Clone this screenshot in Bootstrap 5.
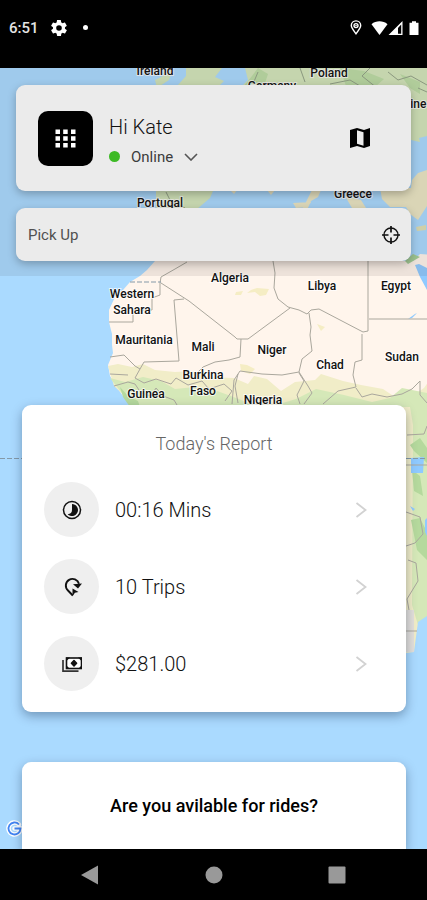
<!DOCTYPE html>
<html lang="en">
<head>
<meta charset="utf-8">
<meta name="viewport" content="width=device-width, initial-scale=1">
<title>Driver home</title>
<link rel="stylesheet" href="https://cdn.jsdelivr.net/npm/bootstrap@5.3.0/dist/css/bootstrap.min.css">
<style>
  body { font-family: Roboto, "Liberation Sans", sans-serif; color: #111; background: #000; }
  svg { display: block; flex: none; }
  .status-bar { height: 68px; padding: 0 7px 13px 9px; }
  .clock { font-size: 15px; font-weight: 500; line-height: 20px; color: #e4e4e4; }
  .gear { margin-left: 12px; }
  .screen { background: #aadaff; isolation: isolate; }
  .map-layer { inset: 0; z-index: -1; }
  .map-layer text { font-size: 12px; font-weight: 500; fill: #111; stroke: #fff; stroke-opacity: .75; stroke-width: 2px; paint-order: stroke; text-anchor: middle; }
  .top-panel { padding: 17px 16px 15px; gap: 17px; background: rgba(60, 40, 40, .09); }
  .panel-card { background: #ebebeb; border-radius: 9px; box-shadow: 0 3px 8px rgba(0, 0, 0, .26); }
  .profile { height: 106px; padding: 0 38px 0 22px; gap: 16px; }
  .menu-btn { width: 55px; height: 55px; border-radius: 10px; background: #000; }
  .who { padding-top: 5px; }
  .greeting { font-size: 20px; line-height: 24px; font-weight: 300; }
  .status-btn { font-size: 15px; line-height: 20px; color: #3c3c3c; gap: 11px; margin-top: 8px; }
  .dot { width: 11px; height: 11px; background: #3dba25; }
  .pickup { height: 53px; padding: 0 11px 0 12px; }
  .pickup input { min-width: 0; font-size: 15px; line-height: 20px; color: #505050; outline: 0; }
  .pickup input::placeholder { color: #505050; opacity: 1; }
  .sheet { margin: 0 21px 0 22px; border: 0; border-radius: 9px; box-shadow: 0 4px 11px rgba(0, 20, 50, .34); }
  .report { margin-top: 129px; padding: 27px 22px 21px; }
  .report h2 { font-size: 18px; line-height: 24px; font-weight: 300; color: #666; margin: 0 0 26px; }
  .report ul { gap: 22px; padding-right: 17px; }
  .stat { gap: 16px; color: #111; font-size: 20px; line-height: 28px; font-weight: 300; }
  .bubble { width: 55px; height: 55px; background: #efefef; }
  .rides { margin-top: 50px; padding: 32px 16px 30px; border-bottom-left-radius: 0; border-bottom-right-radius: 0; }
  .rides h2 { font-size: 18px; line-height: 24px; font-weight: 500; color: #000; }
  .nav-keys { height: 51px; padding: 0 80px; background: #000; z-index: 1; }
</style>
<script src="https://cdn.jsdelivr.net/npm/bootstrap@5.3.0/dist/js/bootstrap.bundle.min.js"></script>
</head>
<body>
<div class="d-flex flex-column min-vh-100">
  <header class="status-bar d-flex align-items-center bg-black text-white">
    <span class="clock">6:51</span>
    <svg class="gear" width="16" height="16" viewBox="2 2 20 20" fill="#fff" aria-hidden="true"><path d="M19.4 13c0-.3.1-.6.1-1s0-.7-.1-1l2.1-1.6c.2-.2.2-.4.1-.6l-2-3.500c-.1-.2-.4-.3-.6-.2l-2.500 1a7 7 0 0 0-1.700-1l-.4-2.600A.5.5 0 0 0 14 2h-4c-.3 0-.5.2-.5.400l-.4 2.700c-.6.200-1.200.600-1.700 1l-2.500-1c-.2-.1-.5 0-.6.200l-2 3.500c-.1.200-.1.500.1.600L4.500 11a8 8 0 0 0 0 2l-2.100 1.600c-.2.200-.2.400-.1.600l2 3.500c.1.200.4.300.6.200l2.500-1c.5.400 1.100.7 1.700 1l.4 2.600c0 .3.2.5.5.5h4c.3 0 .5-.2.5-.4l.4-2.700c.6-.2 1.200-.6 1.700-1l2.500 1c.2.1.5 0 .6-.2l2-3.500c.1-.2.1-.5-.1-.6zM12 15.500a3.500 3.500 0 1 1 0-7 3.500 3.500 0 0 1 0 7z"/></svg>
    <svg class="ms-3" width="5" height="5" viewBox="0 0 6 6" aria-hidden="true"><circle cx="3" cy="3" r="3" fill="#fff"/></svg>
    <svg class="ms-auto" width="12" height="15" viewBox="0 0 12 15" fill="none" stroke="#fff" stroke-width="1.400" aria-hidden="true"><path d="M6 13.800C3.500 10.600 1.300 7.900 1.300 5.600a4.700 4.700 0 0 1 9.400 0c0 2.300-2.200 5-4.700 8.200z"/><circle cx="6" cy="5.600" r="2"/><circle cx="6" cy="5.600" r=".8" fill="#fff" stroke="none"/></svg>
    <svg class="ms-2" width="50" height="16" viewBox="0 0 50 16" fill="#fff" aria-hidden="true"><path d="M1.500 4.200C6 .4 13 .4 17.500 4.200L9.500 15z"/><path d="M32.500 1v14h-14zM31.200 4.500l-3.200 3.500v5.800h3.200z" fill-rule="evenodd"/><path d="M42 1.200h4v1.600h2.500V15h-9V2.800H42z"/></svg>
  </header>

  <main class="screen position-relative flex-grow-1 d-flex flex-column">
    <div class="map-layer position-absolute overflow-hidden">
      <svg width="100%" height="100%" viewBox="0 68 427 781" preserveAspectRatio="xMidYMin slice" role="img" aria-label="Map of Africa">
        <rect y="68" width="427" height="781" fill="#aadaff"/>
        <!-- Europe -->
        <g fill="#d3e6bb">
          <path d="M155 80l8-4 4-8h6l-4 12-12 8zM186 68h36l-7 9 9 4-5 5h-42l9-10z"/>
          <path d="M240 88l8-8-3-12h182v68l-8 2 1 4-9-2H240z"/>
          <path d="M156 191h57l-3 7-14 12h-40z"/>
        </g>
        <path d="M258 68l10 6-4 12h-20l8-10zM340 68l24 3 20 8-8 7h-30zM400 74l20 8v12l-10-6z" fill="#bcdca5"/>
        <path d="M380 188h31l1-8 6-7 9-3v36l-9 14-8-6-4-7h-16l-8-8zM293 203l18-1-3 5-12 1zM230 190h7l-3 4zM267 190h8l-4 5zM312 190h9l-3 7-7 4-4 9h-5zM345 196l16 4 5 8h-14z" fill="#ebe6c4"/>
        <path d="M166 192l4 8 15 8M418 88l9 4M370 68l-8 8 15 12M300 68l5 14M258 72l-5 12M388 72l10 8 13-4 16 9M330 84l20-4 10 6" fill="none" stroke="#93a388"/>
        <path d="M416 227l10-2v5l-9 1z" fill="#dfe0b5"/>
        <!-- Africa -->
        <path d="M155 261l-8 9-7 6-10 6-7 8-8 7-6 13v12l3 12v11l1 8-5 12 2 11 6 10 7 10 12 14v40h297V255l-12-1-7 7z" fill="#fff5ec"/>
        <path d="M405 261l8-7 7 3-12 7z" fill="#a5cf98"/>
        <path d="M108 366l10-2 14 3 11-3 12 6 20 2 17-1 15 6 27 1 14 6 6-8 13 3 14 12 14-9 20-2 6-6 22 7 18 4 22 4 12 8 20-3 9-6 10-14 12-3v252l-9 5-3 18-4 13h-60V470H133v-66l-19-18z" fill="#f1edc8"/>
        <path d="M110 378l15 4 18-5 18 4 14 8 20-2 22 4 14 5 20 8 15 4 30-9 20-10 28 6 28 7 18-4 12-10 25 5v227l-9 5-6-20 1-180-3-18H133z" fill="#d5e8b8"/>
        <path d="M120 387l8 9 10 5 2 6h-10l-7-10zM410 445l10-7 7 10v15l-13-12zM411 520l9-2 7 14v28l-10-10zM412 470l8 6 3 20-9-5z" fill="#b5d99d"/>
        <path d="M406 610h8v42h-8z" fill="#e2dfdb"/>
        <path d="M427 616l-9 6-4 30-8 1v60h21z" fill="#aadaff"/>
        <path d="M411 458l13-1-1 16h-12zM425 520l2-2v18l-2-4zM410 506l5 3-2 2zM415 265l5 12 7 13v-22l-8-4zM417 313l-5 5-4 1 7-5z" fill="#8fcaff"/>
        <path d="M240 364l7 1 8 4-5 5-9-3zM257 288l12 1-3 6-6 1-5-4-8 1 4-3zM236 292l7-1-2 4h-6zM317 324l8 3-4 4z" fill="#f5edc4"/>
        <g fill="none" stroke="#aaa79d" stroke-width="1">
          <path d="M187 262l-12 7-14 8-1 6v12l-8 3v12h-19v12h-24M161 283l28 18 46 36 2 2h11l42-31M273 261l2 12-1 15 4 11 10 8 11 3 8 4 4-4 8-1 44 23 5-1V261M369 319h58M184 299l-10 1 5 61-35 1-4 7-5-3-11-11-14 2M241 339l-1 18-11 3-14 2-12 5-8 8M309 313l2 14-1 8 2 16-10 8-3 13-17 3-20-1-22-3-6 9-2 24"/>
          <path d="M362 334v26l-7 2-2 13 3 12-18 4-15 13M299 373l5 8-7 14 3 9M299 372l9 14 4 7-8 11M356 388l6 9 10-3 15 3 15-3 10-5 8-8v14l7 8"/>
          <path d="M110 374l18 1M114 386l14-4 7 2 6 9 10 3 5-8 7 8 11 4 3 5M140 369l-5 9 9 5 12-4 15 5 5-6 12 7 14-4 7 8 15-5 8 7-7 10M238 374l-3 12 3 17M407 435l17-1 3-8M406 465h21M406 512l14 5 3 17-8 9-9 3M408 560l8 3 2 18-11 18 2 11M406 631h11"/>
        </g>
        <path d="M130 282h31M0 458.500h427" fill="none" stroke="#8499a8" stroke-dasharray="5 2"/>
        <g>
          <text x="155" y="75">Ireland</text><text x="329" y="77">Poland</text><text x="272" y="90">Germany</text>
          <text x="406" y="108">Ukraine</text><text x="353" y="198">Greece</text><text x="160" y="207">Portugal</text>
          <text x="230" y="282">Algeria</text><text x="322" y="290">Libya</text><text x="396" y="290">Egypt</text>
          <text x="132" y="298">Western</text><text x="132" y="314">Sahara</text>
          <text x="144" y="344">Mauritania</text><text x="203" y="351">Mali</text><text x="272" y="354">Niger</text>
          <text x="330" y="369">Chad</text><text x="402" y="361">Sudan</text>
          <text x="203" y="379">Burkina</text><text x="203" y="395">Faso</text>
          <text x="146" y="398">Guinea</text><text x="263" y="404">Nigeria</text>
        </g>
        <path d="M19 824.500a6 6 0 1 0 1.500 4h-6" fill="none" stroke="#fff" stroke-width="4.500" stroke-linecap="round"/>
        <path d="M19 824.500a6 6 0 1 0 1.500 4h-6" fill="none" stroke="#4285f4" stroke-width="1.800"/>
      </svg>
    </div>

    <section class="top-panel d-flex flex-column">
      <div class="panel-card profile d-flex align-items-center">
        <button type="button" class="menu-btn border-0 p-0 d-flex align-items-center justify-content-center" aria-label="Menu">
          <svg width="21" height="19" viewBox="0 0 21 19" fill="#fff"><path d="M.5.500h4.500v4.500H.5zM8.200.500h4.500v4.500H8.200zM16 .500h4.500v4.500H16zM.5 7.200h4.500v4.500H.5zM8.200 7.200h4.500v4.500H8.200zM16 7.200h4.500v4.500H16zM.5 14h4.500v4.500H.5zM8.200 14h4.500v4.500H8.200zM16 14h4.500v4.500H16z"/></svg>
        </button>
        <div class="who flex-grow-1">
          <h1 class="greeting m-0">Hi Kate</h1>
          <button type="button" class="status-btn btn p-0 border-0 d-flex align-items-center" aria-haspopup="true">
            <span class="dot rounded-circle"></span>Online
            <svg width="14" height="8" viewBox="0 0 14 8" fill="none" stroke="#555" stroke-width="1.600" aria-hidden="true"><path d="M1 1l6 6 6-6"/></svg>
          </button>
        </div>
        <button type="button" class="btn p-0 border-0" aria-label="Map">
          <svg width="26" height="26" viewBox="0 0 26 26"><path d="M3 5l7-2 7 2 6-2v18l-6 2-7-2-7 2zM10 5.300v13.400l6.500 2V7.300z" fill="#000" fill-rule="evenodd"/></svg>
        </button>
      </div>
      <div class="panel-card pickup d-flex align-items-center">
        <input type="text" class="flex-grow-1 border-0 bg-transparent p-0" placeholder="Pick Up" aria-label="Pick Up">
        <button type="button" class="btn p-0 border-0" aria-label="Use my location">
          <svg width="18" height="18" viewBox="0 0 18 18" fill="none" stroke="#111"><circle cx="9" cy="9" r="7" stroke-width="1.400"/><path d="M9 0v6.500M9 11.500V18M0 9h6.500M11.500 9H18" stroke-width="1.700"/></svg>
        </button>
      </div>
    </section>

    <section class="card sheet report">
      <h2 class="text-center">Today's Report</h2>
      <ul class="list-unstyled d-flex flex-column m-0">
        <li><a href="#time" class="stat d-flex align-items-center text-decoration-none">
          <span class="bubble rounded-circle d-flex align-items-center justify-content-center flex-shrink-0"><svg width="20" height="20" viewBox="0 0 20 20"><circle cx="10" cy="10" r="8.500" fill="none" stroke="#111" stroke-width="1.500"/><path d="M10 4a6 6 0 1 1-4.300 10.200q4.300-.5 4.300-4.200z" fill="#111"/></svg></span>
          <span class="flex-grow-1">00:16 Mins</span>
          <svg width="12" height="18" viewBox="0 0 12 18" fill="none" stroke="#d2d2d2" stroke-width="1.800" aria-hidden="true"><path d="M1.500 2l9 7-9 7"/></svg></a></li>
        <li><a href="#trips" class="stat d-flex align-items-center text-decoration-none">
          <span class="bubble rounded-circle d-flex align-items-center justify-content-center flex-shrink-0"><svg width="20" height="20" viewBox="0 0 20 20"><path d="M17 6.800A6.700 6.700 0 1 0 6 13.500l4.800 5" fill="none" stroke="#111" stroke-width="1.900"/><path d="M11 7.200l9-.7-4 5zM10.500 11.500l6 3.500-3.600.8-2.400 3.400z" fill="#111"/></svg></span>
          <span class="flex-grow-1">10 Trips</span>
          <svg width="12" height="18" viewBox="0 0 12 18" fill="none" stroke="#d2d2d2" stroke-width="1.800" aria-hidden="true"><path d="M1.500 2l9 7-9 7"/></svg></a></li>
        <li><a href="#earnings" class="stat d-flex align-items-center text-decoration-none">
          <span class="bubble rounded-circle d-flex align-items-center justify-content-center flex-shrink-0"><svg width="20" height="20" viewBox="0 0 20 20"><path d="M1 6v11.200h15.500" fill="none" stroke="#333" stroke-width="1.700"/><rect x="4.500" y="4" width="15" height="10.500" fill="#fff" stroke="#111" stroke-width="1.600"/><path d="M4 3.500h4L4 7.500zM20 3.500h-4l4 4zM4 15v-4l4 4zM20 15v-4l-4 4z" fill="#111"/><path d="M12 6.500l2.600 2.700L12 12l-2.600-2.800z" fill="#111" stroke="#111" stroke-width="1.500" stroke-linejoin="round"/></svg></span>
          <span class="flex-grow-1">$281.00</span>
          <svg width="12" height="18" viewBox="0 0 12 18" fill="none" stroke="#d2d2d2" stroke-width="1.800" aria-hidden="true"><path d="M1.500 2l9 7-9 7"/></svg></a></li>
      </ul>
    </section>

    <section class="card sheet rides flex-grow-1">
      <h2 class="text-center m-0">Are you avilable for rides?</h2>
    </section>
  </main>

  <footer class="nav-keys position-relative d-flex align-items-center justify-content-between">
    <button type="button" class="btn p-0 border-0" aria-label="Back"><svg width="20" height="20" viewBox="0 0 20 20"><path d="M1 10l17-9.500v19z" fill="#999"/></svg></button>
    <button type="button" class="btn p-0 border-0" aria-label="Home"><svg width="20" height="20" viewBox="0 0 20 20"><circle cx="10" cy="10" r="8.500" fill="#999"/></svg></button>
    <button type="button" class="btn p-0 border-0" aria-label="Recent apps"><svg width="20" height="20" viewBox="0 0 20 20"><rect x="1.500" y="1.500" width="17" height="17" rx="1" fill="#999"/></svg></button>
  </footer>
</div>
</body>
</html>
